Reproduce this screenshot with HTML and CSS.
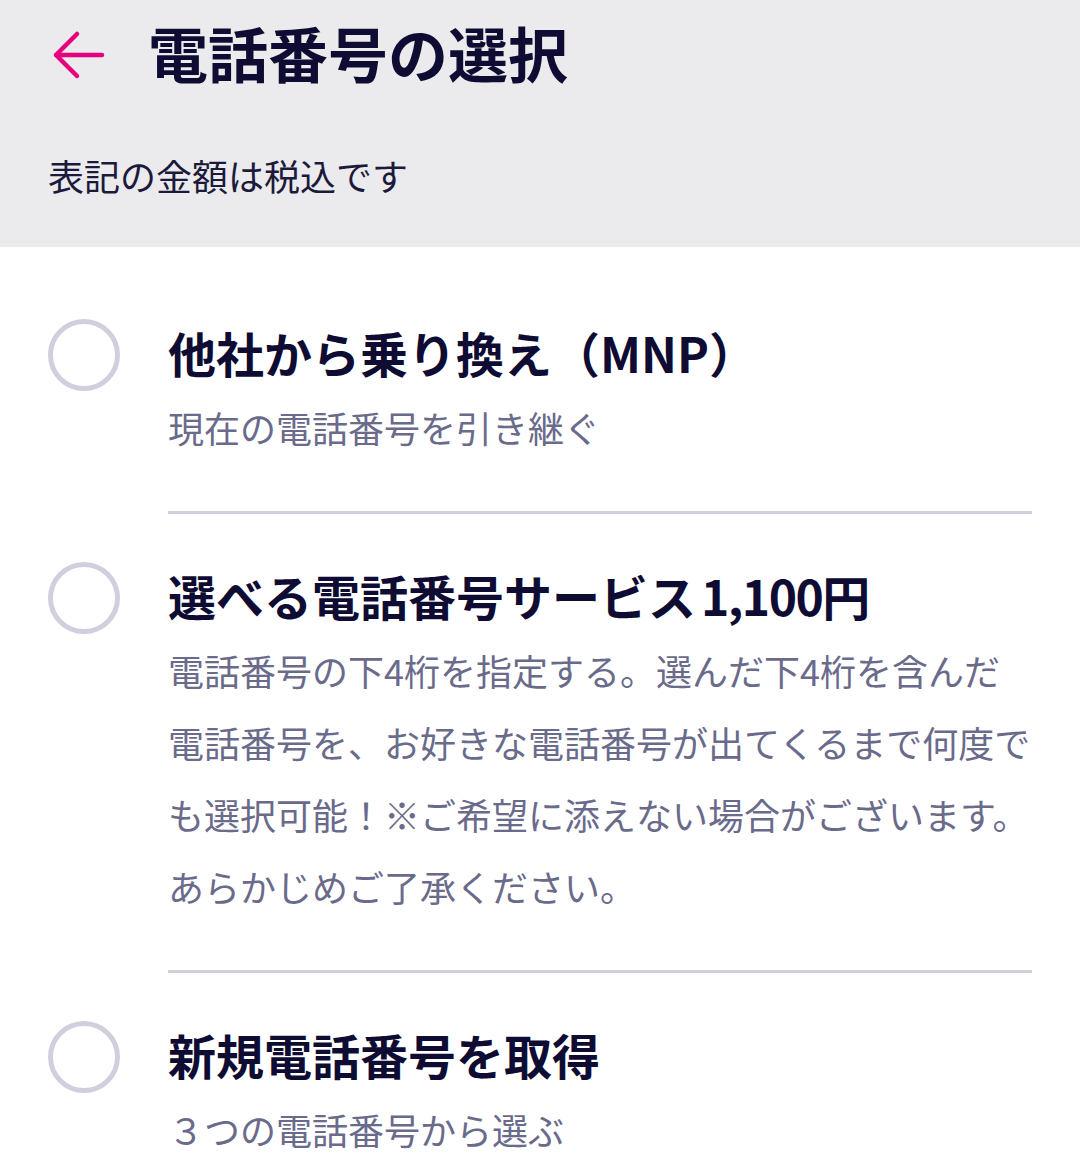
FILE: index.html
```html
<!DOCTYPE html>
<html lang="ja">
<head>
    <meta charset="UTF-8">
    <meta name="viewport" content="width=device-width, initial-scale=1.0">
    <title>電話番号の選択</title>
    <link rel="stylesheet" href="styles.css">
</head>
<body>
    <header class="page-header">
        <div class="title-row">
            <button class="back-btn" aria-label="戻る">
                <svg width="60" height="60" viewBox="0 0 60 60">
                    <path d="M8 30 H54 M29 9 L8 30 L29 51" fill="none" stroke="#e6007e" stroke-width="4.5" stroke-linecap="round" stroke-linejoin="round"/>
                </svg>
            </button>
            <h1>電話番号の選択</h1>
        </div>
        <p class="tax-note">表記の金額は税込です</p>
    </header>

    <ul class="option-list">
        <li class="option">
            <span class="radio"></span>
            <div class="option-body">
                <div class="option-title">他社から乗り換え（MNP）</div>
                <div class="option-desc">現在の電話番号を引き継ぐ</div>
            </div>
        </li>
        <li class="option">
            <span class="radio"></span>
            <div class="option-body">
                <div class="option-title">選べる電話番号サービス <span class="price">1,100円</span></div>
                <div class="option-desc">電話番号の下4桁を指定する。選んだ下4桁を含んだ電話番号を、お好きな電話番号が出てくるまで何度でも選択可能！※ご希望に添えない場合がございます。あらかじめご了承ください。</div>
            </div>
        </li>
        <li class="option">
            <span class="radio"></span>
            <div class="option-body">
                <div class="option-title">新規電話番号を取得</div>
                <div class="option-desc">３つの電話番号から選ぶ</div>
            </div>
        </li>
    </ul>
</body>
</html>
```

FILE: styles.css
```css
/* 共通 */
body {
    margin: 0;
    padding: 0;
    background: #fff;
    font-family: "Noto Sans CJK JP", "Noto Sans", sans-serif;
    color: #0f0c33;
    overflow: hidden;
}

/* ヘッダー */
.page-header {
    background: #ebebed;
    padding: 16px 48px 36px;
}

.title-row {
    display: flex;
    align-items: center;
    gap: 40px;
    height: 72px;
}

.back-btn {
    width: 60px;
    height: 60px;
    margin-top: 6px;
    padding: 0;
    border: none;
    background: none;
    display: flex;
}

.title-row h1 {
    margin: 0;
    font-size: 60px;
    line-height: 72px;
    font-weight: 700;
    color: #0f0c33;
}

.tax-note {
    margin: 51px 0 0;
    font-size: 36px;
    line-height: 72px;
    color: #1b1a3a;
}

/* 選択肢 */
.option-list {
    list-style: none;
    margin: 0;
    padding: 72px 0 0;
}

.option {
    display: flex;
    gap: 48px;
    padding: 0 48px;
}

.radio {
    flex: none;
    box-sizing: border-box;
    width: 72px;
    height: 72px;
    border: 5px solid #cfcfdd;
    border-radius: 50%;
}

.option-body {
    flex: 1;
    padding-bottom: 48px;
    margin-bottom: 48px;
    border-bottom: 3px solid #cfcfdd;
}

.option:last-child .option-body {
    border-bottom: none;
}

.option-title {
    font-size: 48px;
    line-height: 66px;
    padding-bottom: 6px;
    font-weight: 700;
    color: #0f0c33;
}

.price {
    letter-spacing: -1.5px;
    margin-left: -6px;
}

.option-desc {
    font-size: 36px;
    line-height: 72px;
    color: #6a6a8b;
}
```
